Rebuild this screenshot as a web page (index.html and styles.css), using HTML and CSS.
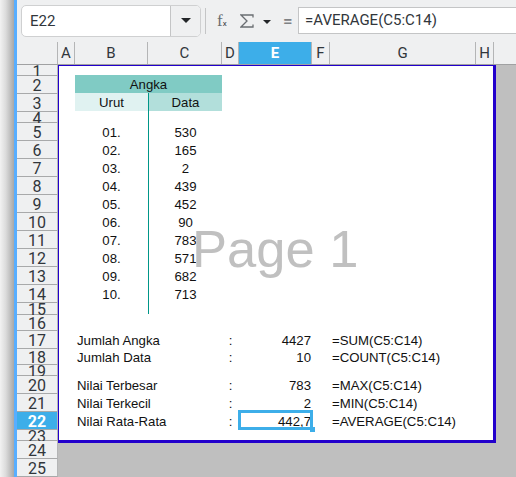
FILE: index.html
```html
<!DOCTYPE html>
<html>
<head>
  <meta charset="UTF-8"/>
  <title>Angka</title>
  <link rel="stylesheet" href="styles.css">
</head>
<body>
<div class="app">
  <div class="edge"></div>
  <div class="main">
    <div class="toolbar">
      <div class="namebox">
        <span class="name">E22</span>
        <span class="drop"><i class="tri"></i></span>
      </div>
      <span class="sep"></span>
      <span class="fx">f<small>x</small></span>
      <svg class="sigma" width="14" height="14" viewBox="0 0 14 14"><path d="M13 3.5V1H1l6 6-6 6h12v-2.5" fill="none" stroke="#6a6e72" stroke-width="1.3"/></svg>
      <i class="tri tri-small"></i>
      <span class="equals">=</span>
      <div class="formula">=AVERAGE(C5:C14)</div>
    </div>

    <div class="colhead">
      <span class="corner"></span>
      <span class="ch cw-a">A</span>
      <span class="ch cw-b">B</span>
      <span class="ch cw-c">C</span>
      <span class="ch cw-d">D</span>
      <span class="ch cw-e on">E</span>
      <span class="ch cw-f">F</span>
      <span class="ch cw-g">G</span>
      <span class="ch cw-h">H</span>
    </div>

    <div class="body">
      <div class="rowhead">
        <span class="rh h11">1</span>
        <span class="rh h18">2</span>
        <span class="rh h18">3</span>
        <span class="rh h11">4</span>
        <span class="rh h18">5</span>
        <span class="rh h18">6</span>
        <span class="rh h18">7</span>
        <span class="rh h18">8</span>
        <span class="rh h18">9</span>
        <span class="rh h18">10</span>
        <span class="rh h18">11</span>
        <span class="rh h18">12</span>
        <span class="rh h18">13</span>
        <span class="rh h18">14</span>
        <span class="rh h12">15</span>
        <span class="rh h16">16</span>
        <span class="rh h18">17</span>
        <span class="rh h16">18</span>
        <span class="rh h11">19</span>
        <span class="rh h18">20</span>
        <span class="rh h18">21</span>
        <span class="rh h18 on">22</span>
        <span class="rh h11">23</span>
        <span class="rh h18">24</span>
        <span class="rh h18">25</span>
      </div>

      <div class="page">
        <div class="row h9"></div>
        <div class="row h18"><span class="cw-a"></span><span class="cell head-top cw-bc">Angka</span></div>
        <div class="row h18"><span class="cw-a"></span><span class="cell head-urut cw-b">Urut</span><span class="cell head-data cw-c rule">Data</span></div>
        <div class="row h11"><span class="cw-a"></span><span class="cw-b"></span><span class="cw-c rule"></span></div>
        <div class="row h18"><span class="cw-a"></span><span class="cell cw-b">01.</span><span class="cell cw-c rule">530</span></div>
        <div class="row h18"><span class="cw-a"></span><span class="cell cw-b">02.</span><span class="cell cw-c rule">165</span></div>
        <div class="row h18"><span class="cw-a"></span><span class="cell cw-b">03.</span><span class="cell cw-c rule">2</span></div>
        <div class="row h18"><span class="cw-a"></span><span class="cell cw-b">04.</span><span class="cell cw-c rule">439</span></div>
        <div class="row h18"><span class="cw-a"></span><span class="cell cw-b">05.</span><span class="cell cw-c rule">452</span></div>
        <div class="row h18"><span class="cw-a"></span><span class="cell cw-b">06.</span><span class="cell cw-c rule">90</span></div>
        <div class="row h18"><span class="cw-a"></span><span class="cell cw-b">07.</span><span class="cell cw-c rule">783</span></div>
        <div class="row h18"><span class="cw-a"></span><span class="cell cw-b">08.</span><span class="cell cw-c rule">571</span></div>
        <div class="row h18"><span class="cw-a"></span><span class="cell cw-b">09.</span><span class="cell cw-c rule">682</span></div>
        <div class="row h18"><span class="cw-a"></span><span class="cell cw-b">10.</span><span class="cell cw-c rule">713</span></div>
        <div class="row h12"><span class="cw-a"></span><span class="cw-b"></span><span class="cw-c rule"></span></div>
        <div class="row h16"></div>
        <div class="row h18"><span class="cw-a"></span><span class="cell left cw-bc">Jumlah Angka</span><span class="cell cw-d">:</span><span class="cell right cw-e">4427</span><span class="cw-f"></span><span class="cell left cw-g">=SUM(C5:C14)</span></div>
        <div class="row h16"><span class="cw-a"></span><span class="cell left cw-bc">Jumlah Data</span><span class="cell cw-d">:</span><span class="cell right cw-e">10</span><span class="cw-f"></span><span class="cell left cw-g">=COUNT(C5:C14)</span></div>
        <div class="row h11"></div>
        <div class="row h18"><span class="cw-a"></span><span class="cell left cw-bc">Nilai Terbesar</span><span class="cell cw-d">:</span><span class="cell right cw-e">783</span><span class="cw-f"></span><span class="cell left cw-g">=MAX(C5:C14)</span></div>
        <div class="row h18"><span class="cw-a"></span><span class="cell left cw-bc">Nilai Terkecil</span><span class="cell cw-d">:</span><span class="cell right cw-e">2</span><span class="cw-f"></span><span class="cell left cw-g">=MIN(C5:C14)</span></div>
        <div class="row h18"><span class="cw-a"></span><span class="cell left cw-bc">Nilai Rata-Rata</span><span class="cell cw-d">:</span><span class="cell right cw-e selected">442,7</span><span class="cw-f"></span><span class="cell left cw-g">=AVERAGE(C5:C14)</span></div>
        <div class="watermark">Page 1</div>
      </div>
    </div>
  </div>
</div>
</body>
</html>
```

FILE: styles.css
```css
html, body {
  margin: 0;
  height: 100%;
  overflow: hidden;
}
.app {
  display: flex;
  height: 477px;
  font-family: Roboto, sans-serif;
  color: #31363b;
  background: #eff0f1;
}
.edge {
  width: 14px;
  flex: none;
  border-right: 3px solid #58aeff;
  background: linear-gradient(to right, #f2f2f2, #dcdcdc 40%, #a8a8a8);
}
.main {
  flex: 1;
  min-width: 0;
}

/* toolbar */
.toolbar {
  display: flex;
  align-items: center;
  height: 42px;
  padding-left: 4px;
  padding-bottom: 1px;
  box-sizing: border-box;
}
.namebox {
  display: flex;
  width: 180px;
  height: 32px;
  box-sizing: border-box;
  border: 1px solid #cfd0d1;
  border-radius: 5px;
  background: #fff;
  overflow: hidden;
}
.name {
  flex: 1;
  padding-left: 8px;
  line-height: 30px;
  font-size: 15px;
}
.drop {
  display: flex;
  align-items: center;
  justify-content: center;
  width: 29px;
  border-left: 1px solid #c4c5c6;
  background: #eff0f1;
}
.tri {
  display: block;
  width: 0;
  height: 0;
  border-left: 5px solid transparent;
  border-right: 5px solid transparent;
  border-top: 5px solid #232629;
}
.sep {
  width: 1px;
  height: 26px;
  margin-left: 4px;
  background: #c4c5c6;
}
.fx {
  width: 12px;
  margin-left: 11px;
  font-family: "Liberation Serif", serif;
  font-size: 17px;
  color: #6a6e72;
}
.fx small {
  font-family: Roboto, sans-serif;
  font-size: 8px;
  color: #31363b;
}
.sigma {
  margin-left: 11px;
}
.tri-small {
  margin-left: 9px;
  margin-top: 3px;
  border-left-width: 4px;
  border-right-width: 4px;
  border-top-width: 4px;
}
.equals {
  width: 10px;
  margin-left: 12px;
  font-size: 17px;
  font-weight: 500;
  color: #7f8285;
}
.formula {
  flex: 1;
  height: 27px;
  margin-left: 5px;
  padding-left: 6px;
  box-sizing: border-box;
  border: 1px solid #c4c5c6;
  border-right: 0;
  background: #fff;
  font-size: 15px;
  line-height: 25px;
}

/* headers */
.colhead {
  display: flex;
  height: 23px;
  box-sizing: border-box;
  border-bottom: 1px solid #a0a1a2;
}
.corner {
  width: 41px;
  box-sizing: border-box;
  border-right: 1px solid #b4b5b6;
}
.ch {
  box-sizing: border-box;
  border-right: 1px solid #b4b5b6;
  text-align: center;
  font-size: 15px;
  line-height: 23px;
}
.ch.on {
  background: #3daee9;
  color: #fff;
  font-weight: 700;
}
.body {
  display: flex;
  height: 412px;
  background: #bfbfbf;
}
.rowhead {
  display: flex;
  flex-direction: column;
  width: 41px;
  flex: none;
}
.rh {
  display: flex;
  flex: none;
  align-items: center;
  justify-content: center;
  box-sizing: border-box;
  padding-top: 3px;
  border-bottom: 1px solid #a8a9aa;
  font-size: 16px;
  line-height: 16px;
  background: #eff0f1;
  border-right: 1px solid #b4b5b6;
}
.rh.on {
  background: #3daee9;
  color: #fff;
  font-weight: 700;
}

.h9 { height: 9px; }
.h11 { height: 11px; }
.h12 { height: 12px; }
.h16 { height: 16px; }
.h18 { height: 18px; }

.cw-a { width: 17px; }
.cw-b { width: 73px; }
.cw-c { width: 74px; }
.cw-bc { width: 147px; }
.cw-d { width: 17px; }
.cw-e { width: 73px; }
.cw-f { width: 18px; }
.cw-g { width: 146px; }
.cw-h { width: 18px; }

/* printed page */
.page {
  position: relative;
  width: 438px;
  height: 378px;
  box-sizing: border-box;
  border: solid #2200cc;
  border-width: 1px 3px 3px 1px;
  background: #fff;
  font-family: "Liberation Sans", Arial, sans-serif;
  font-size: 13.2px;
  color: #111;
}
.row {
  display: flex;
}
.row > .cw-a {
  width: 16px;
}
.cell {
  display: block;
  box-sizing: border-box;
  padding-top: 2px;
  text-align: center;
  line-height: 18px;
  white-space: nowrap;
}
.left {
  padding-left: 2px;
  text-align: left;
}
.right {
  padding-right: 1px;
  text-align: right;
}
.h16 .cell {
  line-height: 16px;
}
.rule {
  box-sizing: border-box;
  border-left: 1px solid #009688;
}
.head-top,
.head-urut,
.head-data {
  padding-top: 1px;
}
.head-top {
  background: #80cbc4;
}
.head-urut {
  background: #e0f2f1;
}
.head-data {
  background: #b2dfdb;
}
.selected {
  position: relative;
}
.selected::before {
  content: "";
  position: absolute;
  top: -1px;
  left: -1px;
  right: -1px;
  bottom: -1px;
  border: 3px solid #3daee9;
}
.selected::after {
  content: "";
  position: absolute;
  right: -3px;
  bottom: -3px;
  width: 5px;
  height: 5px;
  background: #3daee9;
}
.watermark {
  position: absolute;
  left: 133px;
  top: 152px;
  font-size: 52.5px;
  line-height: 62px;
  color: #c0c0c0;
}
```
